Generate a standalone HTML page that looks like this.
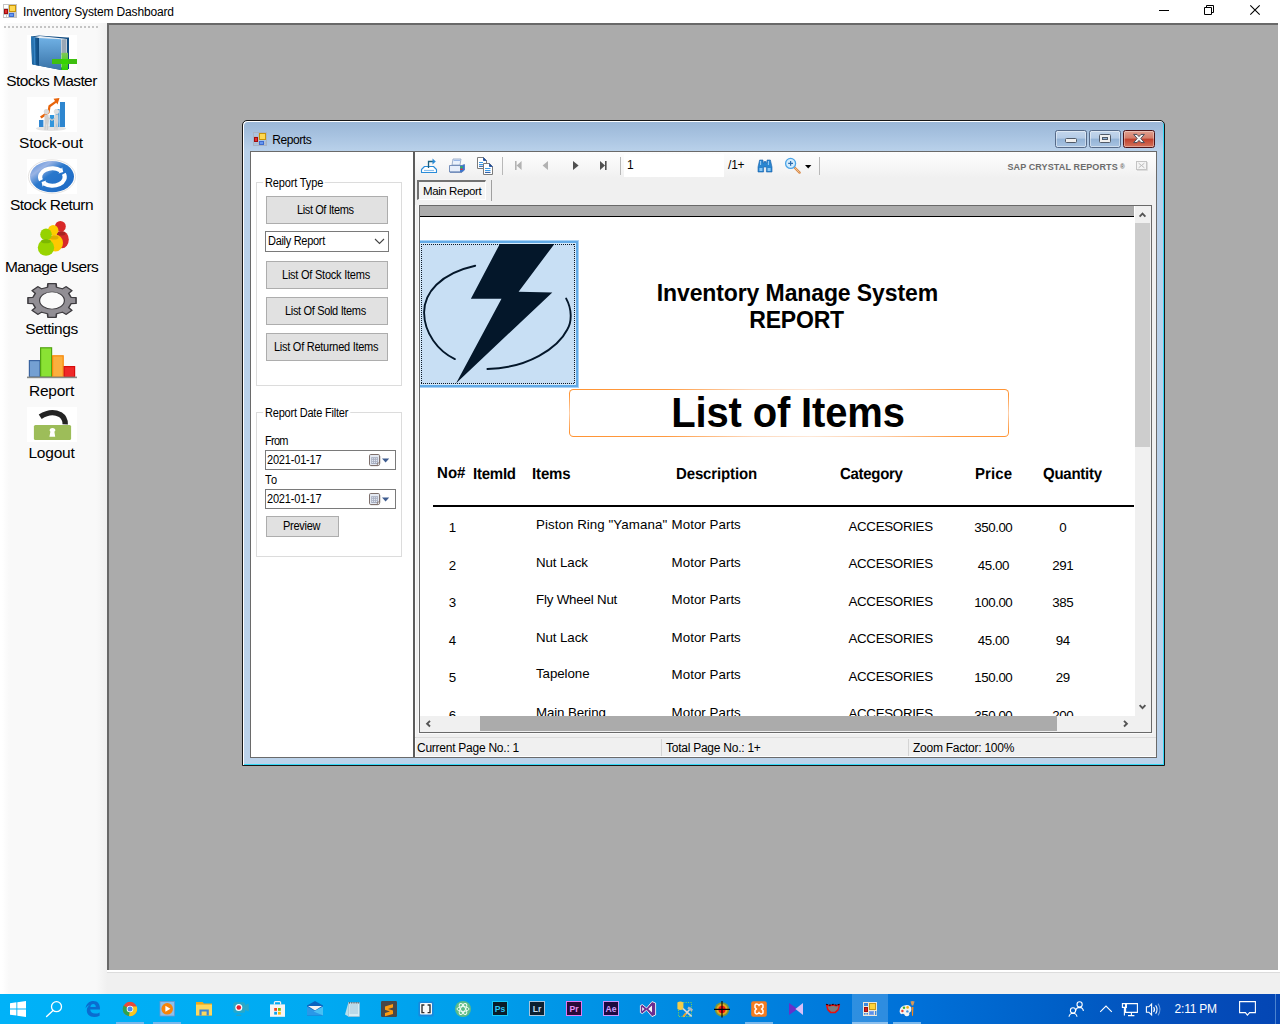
<!DOCTYPE html>
<html lang="en">
<head>
<meta charset="utf-8">
<title>Inventory System Dashboard</title>
<style>
*{box-sizing:border-box;margin:0;padding:0}
html,body{width:1280px;height:1024px;overflow:hidden;background:#fff}
body{position:relative;font-family:"Liberation Sans","DejaVu Sans",sans-serif;font-size:11px;color:#000;-webkit-font-smoothing:antialiased}
.abs{position:absolute}
svg{position:absolute;overflow:visible}
/* ===== main window ===== */
#titlebar{left:0;top:0;width:1280px;height:23px;background:#fff}
#titletext{left:23px;top:5px;font-size:12px;line-height:15px;white-space:nowrap;color:#000;letter-spacing:-.15px}
#sidebar{left:0;top:23px;width:107px;height:971px;background:linear-gradient(90deg,#fff 0,#fff 2px,#f9f9f9 9px,#f9f9f9 96px,#f1f1f1 106px,#f0f0f0 107px)}
#grip{left:4px;top:26px;width:95px;height:2px;background-image:linear-gradient(90deg,#c4c4c4 2px,transparent 2px);background-size:4px 2px}
.sb-lbl{left:0;width:103px;text-align:center;font-size:15.5px;line-height:20px;white-space:nowrap;color:#000}
.sb-ico{left:27px;width:50px;height:35px;background:#fff}
#mdi{left:107px;top:23px;width:1171px;height:947px;background:#ababab;border-left:2px solid #696969;border-top:2px solid #696969}
#mdistatus{left:107px;top:972px;width:1173px;height:22px;background:#f0f0f0}
/* ===== taskbar ===== */
#taskbar{left:0;top:994px;width:1280px;height:30px;background:linear-gradient(90deg,#00b2f8 0,#00aaf2 316px,#009cea 500px,#008ae2 680px,#0070d8 920px,#005ec6 1070px,#0450bc 1160px,#0448b6 1250px,#0446b4 1280px)}
/* ===== Reports child window ===== */
#win{left:242px;top:120px;width:923px;height:646px;border:1px solid #161616;border-radius:5px 5px 0 0;background:linear-gradient(180deg,#9ab6d6 0,#a7c2e0 14px,#b9d1ea 30px,#bbd2ea 100%);box-shadow:inset 1px 1px 0 0 #fff,inset -1px -1px 0 0 #34d8f6}
#wintitle{left:272.2px;top:133px;font-size:12px;line-height:15px;white-space:nowrap;letter-spacing:-.4px}
#client{left:250px;top:151px;width:907px;height:607px;background:#fff;border:1px solid #6a6a6a}

/* title controls */
.ico14{width:14px;height:14px}
/* Reports window internals */
.btn{background:#e1e1e1;border:1px solid #adadad;text-align:left;font-size:11px;white-space:nowrap;line-height:26px;letter-spacing:-.35px}
.gb{border:1px solid #dcdcdc}
.gbl{background:#fff;font-size:12px;line-height:13px;white-space:nowrap;padding:0 2px;letter-spacing:-.3px;transform:scaleX(.9167);transform-origin:2px 0}
.lbl{font-size:12px;line-height:13px;white-space:nowrap;letter-spacing:-.3px;transform:scaleX(.9167);transform-origin:0 0}
.ms{display:inline-block;font-size:12px;transform:scaleX(.9167);transform-origin:0 50%;white-space:nowrap}
.inp{background:#fff;border:1px solid #7a7a7a;font-size:11px;line-height:18px;white-space:nowrap;letter-spacing:-.3px}
.cap{border:1px solid;border-radius:2.5px}
#tb{left:415px;top:152px;width:741px;height:53px;background:linear-gradient(180deg,#fdfdfd 0,#f9f9f9 10px,#f0f0f0 26px,#f0f0f0 100%)}
.sep{width:1px;background:#b8b8b8}
.seg{font-size:12px;line-height:15px;white-space:nowrap}
.rh{font-weight:bold;font-size:16px;line-height:17px;white-space:nowrap;text-rendering:geometricPrecision;transform:scaleX(.9375);transform-origin:0 0}
.rd{font-size:13.33px;line-height:15px;white-space:nowrap}
.rc{text-align:center}
.rn{letter-spacing:-.45px;text-indent:.45px}
</style>
</head>
<body>
<div id="titlebar" class="abs"></div>
<div id="titletext" class="abs">Inventory System Dashboard</div>

<!-- main window title bar icon + controls -->
<svg class="abs" style="left:3px;top:4px" width="14" height="14" viewBox="0 0 14 14">
<rect x=".5" y=".5" width="13" height="13" fill="#fff" stroke="#c4c4c4"/>
<path d="M5.5 1 V13 M1 4.5 H5.5 M1 10.5 H5.5 M5.5 8.5 H13 M12.5 9 V13 M3.5 11 V13 M11.5 9 V13" stroke="#c8c8c8" stroke-width="1" fill="none"/>
<rect x="6.5" y="1.5" width="6" height="6" fill="#ffd850" stroke="#c89408"/>
<rect x="1.5" y="5.5" width="3" height="4" fill="#e03030" stroke="#a00c0c"/>
<rect x="6.5" y="9.5" width="4" height="3" fill="#6898f0" stroke="#3c6cd0"/>
</svg>
<svg class="abs" style="left:1150px;top:0" width="130" height="23" viewBox="0 0 130 23">
<path d="M9 10.5 H19" stroke="#000" stroke-width="1"/>
<path d="M54.5 7.5 H61.5 V14.5 H54.5 Z M56.5 7.5 V5.5 H63.5 V12.5 H61.5" fill="none" stroke="#000" stroke-width="1"/>
<path d="M100.3 5.3 L109.7 14.7 M109.7 5.3 L100.3 14.7" stroke="#000" stroke-width="1.1"/>
</svg>
<div id="sidebar" class="abs"></div>
<div id="grip" class="abs"></div>

<!-- ===== sidebar items ===== -->
<div class="abs sb-ico" style="top:35px"><svg width="50" height="35" viewBox="0 0 50 35">
<defs>
<linearGradient id="bk1" x1="0" y1="0" x2="0" y2="1"><stop offset="0" stop-color="#6fb0e4"/><stop offset="1" stop-color="#3a74a8"/></linearGradient>
<linearGradient id="bk2" x1="0" y1="0" x2="1" y2="0"><stop offset="0" stop-color="#2f7fbe"/><stop offset=".5" stop-color="#1a5e98"/><stop offset="1" stop-color="#0f4a80"/></linearGradient>
<linearGradient id="pl1" x1="0" y1="0" x2="0" y2="1"><stop offset="0" stop-color="#7fc858"/><stop offset="1" stop-color="#2fd000"/></linearGradient>
</defs>
<path d="M4 1.5 L12 0.5 L40 2.5 L42 2.5 L42 34 L34 35 L6 29.6 L5 29 Z" fill="#0f4a80"/>
<path d="M6 2.2 L13 1 L36 3.4 L40 4 L40 32 L36 34 Z" fill="#e8eef4"/>
<path d="M34.5 4.5 L39.5 4 L39.5 20 L34.5 20 Z" fill="#9aa7b6"/>
<path d="M4 1.5 L12 3 L12 30.8 L5.4 29.4 Z" fill="url(#bk2)"/><path d="M6.4 2.2 L8 2.5 L8.6 30 L7.2 29.7 Z" fill="#3f8fd0" opacity=".8"/>
<path d="M12 3 L34 4.2 L34 35 L12 30.8 Z" fill="url(#bk1)"/>
<rect x="34.4" y="17.8" width="6.6" height="17.2" fill="url(#pl1)"/>
<rect x="25" y="24" width="25" height="5" fill="#3fbf10"/>
<rect x="34.4" y="24" width="6.6" height="5" fill="#35d400"/>
</svg></div>
<div class="abs sb-lbl" style="top:71px;letter-spacing:-.6px">Stocks Master</div>

<div class="abs sb-ico" style="top:97px"><svg width="50" height="35" viewBox="0 0 50 35">
<ellipse cx="24" cy="31.5" rx="15" ry="2.5" fill="#e4e4e4"/>
<rect x="12" y="23" width="4.4" height="7" fill="#2f86d2"/>
<rect x="22.8" y="18" width="4.4" height="12" fill="#3196dc"/>
<rect x="28.6" y="12" width="4" height="18" fill="#4a9ede"/>
<rect x="33" y="5" width="5" height="25" fill="#2e86cf"/>
<path d="M13 19.5 L20.5 14.5 L21.5 8.5 L28 4 L26.5 1.8 L32.5 1 L30.5 7.5 L29.3 5.8 L23.5 10 L22.5 16 L14.5 21.5 Z" fill="#e8640a"/>
<circle cx="19.4" cy="14.5" r="2.6" fill="#d9d9d9"/>
<path d="M17.5 17.5 L21.5 17.5 L22 24 L21 33 L19.6 33 L19.6 26 L18.6 33 L17.4 33 Z" fill="#cfcfcf"/>
<circle cx="29.4" cy="14.5" r="2.6" fill="#dedede"/>
<path d="M27.6 17.5 L31.2 17.5 L31.4 24 L30.6 33 L29.4 33 L29.2 26 L28.4 33 L27.2 33 Z" fill="#d4d4d4"/>
<path d="M21.5 20 L25 22.4 L28 20.4 L28 22 L25 24 L21.5 21.8 Z" fill="#c8c8c8"/>
</svg></div>
<div class="abs sb-lbl" style="top:133px;letter-spacing:-.2px;left:-.6px">Stock-out</div>

<div class="abs sb-ico" style="top:159px"><svg width="50" height="35" viewBox="0 0 50 35">
<defs><linearGradient id="sr1" x1="0" y1="0" x2="1" y2="1"><stop offset="0" stop-color="#4a86d8"/><stop offset=".25" stop-color="#9ab4e4"/><stop offset=".45" stop-color="#2a78cc"/><stop offset="1" stop-color="#1c68c4"/></linearGradient></defs>
<ellipse cx="25" cy="17.6" rx="23.6" ry="16.8" fill="none" stroke="#e6e4e2" stroke-width="1"/>
<ellipse cx="25" cy="17.6" rx="22" ry="15.6" fill="url(#sr1)"/>
<path d="M14.00 21.26 A12.3 8.7 0 0 1 33.63 11.53 M36.80 14.74 A12.3 8.7 0 0 1 17.17 24.47" fill="none" stroke="#fff" stroke-width="4.2"/>
<path d="M31.48 14.41 L36.23 13.07 L35.13 8.27 Z M19.32 21.59 L14.57 22.93 L15.67 27.73 Z" fill="#fff"/>
</svg></div>
<div class="abs sb-lbl" style="top:195px;letter-spacing:-.56px">Stock Return</div>

<div class="abs" style="left:27px;top:221px;width:50px;height:35px"><svg width="50" height="35" viewBox="0 0 50 35">
<circle cx="33.4" cy="5.4" r="5.4" fill="#d82828"/>
<ellipse cx="35" cy="18.6" rx="6.8" ry="8.6" fill="#d62a2a"/>
<ellipse cx="34" cy="12.5" rx="4.6" ry="2" fill="#a82222"/>
<circle cx="26.2" cy="9.2" r="5.2" fill="#ffcc00"/>
<ellipse cx="28.4" cy="22" rx="7.6" ry="8.6" fill="#ffc800"/>
<ellipse cx="27" cy="16.4" rx="4.6" ry="2" fill="#e0b000"/>
<circle cx="19" cy="13.4" r="5.8" fill="#96d200"/>
<ellipse cx="19" cy="26.6" rx="8.2" ry="8.2" fill="#98d400"/>
<ellipse cx="19" cy="20.2" rx="5" ry="2" fill="#7cb800"/>
</svg></div>
<div class="abs sb-lbl" style="top:257px;letter-spacing:-.64px">Manage Users</div>

<div class="abs" style="left:27px;top:283px;width:50px;height:35px"><svg width="50" height="35" viewBox="-25 -17.5 50 35">
<g transform="scale(1,0.7)">
<path id="gearp" fill="#918e94" stroke="#3e3c40" stroke-width="1.6" stroke-linejoin="round" d="M-4.47 -19.08 L-4.13 -24.05 L4.13 -24.05 L4.47 -19.08 L10.33 -16.65 L14.09 -19.92 L19.92 -14.09 L16.65 -10.33 L19.08 -4.47 L24.05 -4.13 L24.05 4.13 L19.08 4.47 L16.65 10.33 L19.92 14.09 L14.09 19.92 L10.33 16.65 L4.47 19.08 L4.13 24.05 L-4.13 24.05 L-4.47 19.08 L-10.33 16.65 L-14.09 19.92 L-19.92 14.09 L-16.65 10.33 L-19.08 4.47 L-24.05 4.13 L-24.05 -4.13 L-19.08 -4.47 L-16.65 -10.33 L-19.92 -14.09 L-14.09 -19.92 L-10.33 -16.65 Z"/>
<ellipse cx="0" cy="0" rx="12.4" ry="12.4" fill="#fafafa" stroke="#3e3c40" stroke-width="1.2"/>
</g>
</svg></div>
<div class="abs sb-lbl" style="top:319px;letter-spacing:-.45px">Settings</div>

<div class="abs" style="left:27px;top:345px;width:50px;height:35px"><svg width="50" height="35" viewBox="0 0 50 35">
<rect x="2.4" y="15.6" width="10.6" height="16.4" fill="#74a0d2" stroke="#3a64a0" stroke-width="1.2"/>
<rect x="13.6" y="2.8" width="11" height="29.2" fill="#8ae234" stroke="#52a412" stroke-width="1.2"/>
<rect x="25.6" y="10.8" width="10.6" height="21.2" fill="#fcaf3e" stroke="#f88808" stroke-width="1.2"/>
<rect x="37.2" y="21.6" width="10.4" height="10.4" fill="#ef2929" stroke="#d80c0c" stroke-width="1.2"/>
<rect x="0" y="31.6" width="50" height="1.6" fill="#888a85"/>
</svg></div>
<div class="abs sb-lbl" style="top:381px;letter-spacing:-.25px">Report</div>

<div class="abs sb-ico" style="top:407px"><svg width="50" height="35" viewBox="0 0 50 35">
<path d="M13.2 9.8 Q24 2.8 33.2 7.6 Q38.4 11 38.2 17.4" fill="none" stroke="#232323" stroke-width="5.4"/>
<rect x="6.9" y="18" width="37.2" height="15" rx="1.6" fill="#9dbd59"/>
<path d="M22.6 23.6 Q22.6 21 25.4 21 Q28.4 21 28.4 23.6 L27.4 24.8 L28.2 29.8 L22.4 29.8 L23.4 24.8 Z" fill="#fff"/>
</svg></div>
<div class="abs sb-lbl" style="top:443px;letter-spacing:-.2px">Logout</div>
<div id="mdi" class="abs"></div>
<div id="mdistatus" class="abs"></div>
<div class="abs" style="left:107px;top:972px;width:1173px;height:1px;background:#dcdcdc"></div>
<div id="taskbar" class="abs"></div>

<!-- ===== taskbar icons ===== -->
<div class="abs" style="left:852px;top:994px;width:36px;height:30px;background:rgba(255,255,255,.18)"></div>
<div class="abs" style="left:116px;top:1022px;width:28px;height:2px;background:#7ab8ec"></div>
<div class="abs" style="left:153px;top:1022px;width:28px;height:2px;background:#7ab8ec"></div>
<div class="abs" style="left:745px;top:1022px;width:28px;height:2px;background:#7ab8ec"></div>
<div class="abs" style="left:852px;top:1022px;width:36px;height:2px;background:#8cc0ee"></div>
<div class="abs" style="left:893px;top:1022px;width:28px;height:2px;background:#7ab8ec"></div>
<svg class="abs" style="left:0;top:994px" width="1280" height="30" viewBox="0 994 1280 30">
<!-- start -->
<path d="M10 1003.2 L16.4 1002.3 V1008.5 H10 Z M17.3 1002.2 L26 1001 V1008.5 H17.3 Z M10 1009.4 H16.4 V1015.6 L10 1014.7 Z M17.3 1009.4 H26 V1017 L17.3 1015.8 Z" fill="#fff"/>
<!-- search -->
<circle cx="56.5" cy="1006.7" r="5" fill="none" stroke="#fff" stroke-width="1.3"/><path d="M53 1010.4 L46.6 1016.6" stroke="#fff" stroke-width="1.4" stroke-linecap="round"/>
<!-- edge -->
<path d="M85.6 1008.6 C86 1003.6 89.4 1001 93.4 1001 C97.8 1001 100.2 1004.2 100 1009.6 H90.2 C90.4 1012.4 92.4 1013.6 95 1013.6 C96.8 1013.6 98.4 1013.2 99.6 1012.4 V1015.8 C98 1016.6 96.2 1017 94.2 1017 C89.4 1017 86.6 1014 86.8 1010 C86.9 1008 88 1006.2 89.8 1005 C88 1005.4 86.4 1006.8 85.6 1008.6 Z M90.4 1007 H95.8 C95.8 1005 94.8 1004 93.2 1004 C91.6 1004 90.6 1005.2 90.4 1007 Z" fill="#0a6cd0" fill-rule="evenodd"/>
<!-- chrome -->
<circle cx="130" cy="1009" r="7.2" fill="#e84a3a"/>
<path d="M130 1009 L123.6 1005.6 A7.2 7.2 0 0 0 129 1016.1 L132.4 1010.6 Z" fill="#2ea44e"/>
<path d="M130 1009 L129 1016.1 A7.2 7.2 0 0 0 136.8 1006.6 H130 Z" fill="#f8c820"/>
<circle cx="130" cy="1009" r="3.3" fill="#fff"/><circle cx="130" cy="1009" r="2.5" fill="#4a8cf0"/>
<!-- media player -->
<rect x="160" y="1001.6" width="14.4" height="14.4" fill="#8cc0ec" stroke="#6a98d0" stroke-width=".8"/>
<circle cx="167.2" cy="1008.8" r="5.8" fill="#f88408"/><path d="M165.4 1005.8 L170.4 1008.8 L165.4 1011.8 Z" fill="#fff"/>
<!-- explorer -->
<path d="M196 1002 H202.6 L204 1003.6 H212 V1015.4 H196 Z" fill="#f0a818"/><path d="M196 1004.6 H212 V1015.4 H196 Z" fill="#fcd860"/>
<path d="M199.4 1009.4 H208.8 V1015.4 H206.6 V1011.6 H201.6 V1015.4 H199.4 Z" fill="#3a86d8"/>
<!-- recorder -->
<path d="M233.4 1003.8 Q233.4 1002.2 235 1002.2 H243.4 Q245 1002.2 245 1003.8 V1005 L248.8 1003.4 V1011.6 L245 1010 V1011.2 Q245 1012.8 243.4 1012.8 H235 Q233.4 1012.8 233.4 1011.2 Z" fill="#2aa8c8"/>
<circle cx="238.8" cy="1007.5" r="3.5" fill="#fff"/><circle cx="238.8" cy="1007.5" r="2.3" fill="#e82030"/><path d="M237 1014.4 L240.6 1014.4 L241.6 1016 H236 Z" fill="#2aa0c0"/>
<!-- store -->
<path d="M274.4 1004.4 V1002.6 Q274.4 1001.6 275.4 1001.6 H279.6 Q280.6 1001.6 280.6 1002.6 V1004.4" fill="none" stroke="#f0f0f0" stroke-width="1.2"/>
<rect x="270" y="1004.4" width="15" height="12.4" fill="#f4f4f4"/>
<rect x="274.2" y="1008" width="2.8" height="2.8" fill="#f04820"/><rect x="278" y="1008" width="2.8" height="2.8" fill="#7cbc08"/><rect x="274.2" y="1011.8" width="2.8" height="2.8" fill="#08a4f0"/><rect x="278" y="1011.8" width="2.8" height="2.8" fill="#fcb808"/>
<!-- mail -->
<path d="M307 1005.6 L315 1001 L323 1005.6 V1015.6 H307 Z" fill="#0a64c0"/><path d="M308 1006 H322 L315 1010.6 Z" fill="#f4f4f4"/><path d="M307 1006.6 L323 1015.6 H307 Z" fill="#2a98e8"/><path d="M323 1006.6 V1015.6 L313.6 1011.4 Z" fill="#48c0f4"/>
<!-- notepad -->
<path d="M345 1014.6 L348.4 1002.4 H359.4 V1016.4 H348.4 Z" fill="#b8e0ec"/><rect x="348.4" y="1002.8" width="11" height="13.6" fill="#d4ecf4" stroke="#98b8c8" stroke-width=".6"/><path d="M349.6 1005 H358 M349.6 1007 H358 M349.6 1009 H358 M349.6 1011 H358 M349.6 1013 H358" stroke="#8ab8d0" stroke-width=".7"/><path d="M349.6 1002.2 V1003.6 M351.8 1002.2 V1003.6 M354 1002.2 V1003.6 M356.2 1002.2 V1003.6 M358.2 1002.2 V1003.6" stroke="#404040" stroke-width=".9"/>
<!-- sublime -->
<rect x="381" y="1001" width="16" height="16" rx="1.2" fill="#484848"/><path d="M385 1006.4 L393 1004 V1007.4 L388 1009 L393 1010.6 V1014 L385 1016.2 V1013 L390 1011.4 L385 1009.8 Z" fill="#fc9c10"/>
<!-- brackets -->
<rect x="418.4" y="1001.4" width="15.2" height="15.2" rx="1.6" fill="#1a88dc"/><rect x="420" y="1003" width="12" height="11.6" rx="1" fill="#f8f8f8"/><path d="M424.4 1005 H422 V1012.6 H424.4 M427.6 1005 H430 V1012.6 H427.6" fill="none" stroke="#303030" stroke-width="1.4"/>
<!-- atom -->
<circle cx="463" cy="1009" r="8" fill="#5cbc88"/><g fill="none" stroke="#f0fcf4" stroke-width="1"><ellipse cx="463" cy="1009" rx="6" ry="2.4"/><ellipse cx="463" cy="1009" rx="6" ry="2.4" transform="rotate(60 463 1009)"/><ellipse cx="463" cy="1009" rx="6" ry="2.4" transform="rotate(120 463 1009)"/></g>
<!-- adobe -->
<rect x="492.5" y="1001.5" width="15" height="14" fill="#0a1c28" stroke="#18c8f8" stroke-width="1"/>
<rect x="529.5" y="1001.5" width="15" height="14" fill="#0c2030" stroke="#a8c4dc" stroke-width="1"/>
<rect x="566.5" y="1001.5" width="15" height="14" fill="#2a0838" stroke="#e478f0" stroke-width="1"/>
<rect x="603.5" y="1001.5" width="15" height="14" fill="#1c0840" stroke="#cc90f8" stroke-width="1"/>
<text x="500" y="1012.2" font-family="Liberation Sans,sans-serif" font-size="8.6" font-weight="bold" text-anchor="middle" fill="#28c8f8">Ps</text>
<text x="537" y="1012.2" font-family="Liberation Sans,sans-serif" font-size="8.6" font-weight="bold" text-anchor="middle" fill="#c0dcf0">Lr</text>
<text x="574" y="1012.2" font-family="Liberation Sans,sans-serif" font-size="8.6" font-weight="bold" text-anchor="middle" fill="#e890f4">Pr</text>
<text x="611" y="1012.2" font-family="Liberation Sans,sans-serif" font-size="8.6" font-weight="bold" text-anchor="middle" fill="#d0a0fc">Ae</text>
<!-- visual studio -->
<path d="M640.4 1005.6 L642.4 1004.6 L646.6 1008 L652 1001.6 L655.6 1003 V1015 L652 1016.6 L646.6 1010.2 L642.4 1013.6 L640.4 1012.6 Z" fill="#6c2c90" stroke="#f4f4f4" stroke-width=".9" stroke-linejoin="round"/><path d="M652 1005.6 V1012.4 L648.2 1009 Z M642.2 1007 V1011.2 L644.4 1009.1 Z" fill="#f4f4f4"/>
<!-- tools -->
<rect x="678.5" y="1002.5" width="13" height="14" fill="none" stroke="#88d848" stroke-width="1" stroke-dasharray="1 1.4"/><path d="M677.4 1002.4 Q680.4 1000.6 683.4 1002.4 V1009 Q680.4 1010.8 677.4 1009 Z" fill="#f4cc48"/><path d="M683 1008.6 L691.6 1016.4 M691 1008 L683.2 1016.6" stroke="#d8d8d8" stroke-width="1.6"/><path d="M688 1007.6 L692.4 1010.6" stroke="#b8b8b8" stroke-width="2.4"/><path d="M683.2 1016.6 L686 1013.4" stroke="#f0a020" stroke-width="1.6"/>
<!-- target -->
<circle cx="722" cy="1009.4" r="7.2" fill="#7c9838"/><circle cx="722" cy="1009.4" r="5.6" fill="#e8a820"/><circle cx="722" cy="1009.4" r="3.6" fill="#f01810"/><path d="M714 1009.4 H730 M722 1001 V1017.6" stroke="#000" stroke-width="1.1"/>
<!-- xampp -->
<rect x="751.2" y="1001.2" width="15.6" height="15.6" rx="2" fill="#f47c20"/><path d="M755 1005.4 Q755 1004 756.6 1004 Q758 1004 759 1005.4 Q760 1004 761.4 1004 Q763 1004 763 1005.4 V1007.4 L761.6 1009 L763 1010.6 V1012.6 Q763 1014 761.4 1014 Q760 1014 759 1012.6 Q758 1014 756.6 1014 Q755 1014 755 1012.6 V1010.6 L756.4 1009 L755 1007.4 Z" fill="none" stroke="#fff" stroke-width="1.5"/>
<!-- vs preview bowtie -->
<path d="M789 1003 L797.6 1009 L789 1015 Z" fill="#6830c8"/><path d="M803 1003 L795.4 1009 L803 1015 Z" fill="#d8c0f8"/>
<!-- bird -->
<path d="M826.6 1004.8 L829.4 1005.8 L832.8 1005 L836.4 1005.8 L839.4 1004.8 L838.2 1009.6 L835 1012.6 H830.8 L827.8 1009.6 Z" fill="#7c7c7c" stroke="#e81010" stroke-width="1.5" stroke-linejoin="round"/><path d="M826 1004.2 L829.6 1005.2 L833 1004.4 L836.4 1005.2 L840 1004.2" fill="none" stroke="#180808" stroke-width="1.1" stroke-dasharray="2 1"/>
<!-- active app icon -->
<rect x="863" y="1002" width="14" height="14" fill="#ece8d8"/><rect x="864" y="1003" width="4" height="3" fill="#3a88e0"/><rect x="869.5" y="1003.5" width="6" height="6" fill="#ffd43a" stroke="#c89818"/><rect x="864.5" y="1007.5" width="3" height="4" fill="#c82020" stroke="#981010"/><rect x="869.5" y="1011.5" width="4" height="3" fill="#5a90e8" stroke="#7aa4ec"/><rect x="864" y="1013" width="1.6" height="1.6" fill="#3a88e0"/><rect x="866.4" y="1013" width="1.6" height="1.6" fill="#3a88e0"/><rect x="875" y="1011" width="1.4" height="4" fill="#3a88e0"/>
<!-- paint -->
<path d="M899.6 1011.6 Q899.6 1005.6 906.4 1005 Q911.6 1005 911.4 1009.6 Q911.2 1012 909.6 1012.4 Q908.8 1013 909.4 1014.4 Q909 1016.4 906.6 1016.2 Q904.6 1016 904.4 1014.4 Q903 1013.4 901.6 1014.2 Q899.6 1014 899.6 1011.6 Z" fill="#f4f4f0"/><circle cx="902.4" cy="1011" r="1.2" fill="#e84030"/><circle cx="904" cy="1007.8" r="1.2" fill="#40b030"/><circle cx="907.6" cy="1007.4" r="1.3" fill="#f8b010"/><circle cx="907.4" cy="1011.4" r="1.2" fill="#3a90e0"/><path d="M911.6 1007 H913.4 L913 1015.8 H912 Z" fill="#f88818"/><path d="M910.4 1001.6 Q912.4 1000.6 914.6 1001.6 L913.2 1005.4 H911.8 Z" fill="#d89858"/>
<!-- tray -->
<g fill="none" stroke="#fff" stroke-width="1.1"><circle cx="1079.6" cy="1004.4" r="2.6"/><path d="M1075.6 1011 Q1076 1007.6 1079.6 1007.4 Q1083 1007.6 1083.4 1011"/><circle cx="1073" cy="1010.4" r="2.6"/><path d="M1069 1016.8 Q1069.4 1013.4 1073 1013.2 Q1076.6 1013.4 1077 1016.8"/>
<path d="M1100.2 1011.8 L1106 1006 L1111.8 1011.8"/>
<path d="M1125.6 1003.6 H1137.4 V1012.4 H1125.6 Z M1131.4 1012.4 V1015.4 M1128 1015.6 H1134.4 M1122.4 1003.6 H1126.4 V1007.4 H1122.4 Z M1124.4 1007.4 V1015.6"/>
<path d="M1146.4 1006.8 H1148.8 L1151.6 1004 V1015 L1148.8 1012.2 H1146.4 Z"/><path d="M1153.6 1007 Q1155.4 1009.4 1153.6 1012"/><path d="M1155.6 1005.4 Q1158.6 1009.4 1155.6 1013.6"/><path d="M1158 1003.6 Q1162 1009.4 1158 1015.4" opacity=".45"/>
<path d="M1239.6 1001.6 H1255.4 V1012.6 H1249.6 L1247.4 1015.2 L1245.4 1012.6 H1239.6 Z"/></g>
<text x="1174.6" y="1013.4" font-family="Liberation Sans,sans-serif" font-size="12" fill="#fff" letter-spacing="-.22">2:11 PM</text>
<rect x="1275" y="994" width="1" height="30" fill="#6a9cdc" opacity=".7"/>
</svg>
<div id="win" class="abs"></div>
<div id="wintitle" class="abs">Reports</div>
<div id="client" class="abs"></div>
<!-- ===== Reports window: title ===== -->
<svg class="abs" style="left:253px;top:132px" width="14" height="14" viewBox="0 0 14 14">
<rect x=".5" y=".5" width="13" height="13" fill="#aac4e2" stroke="#a8b4c4"/>
<path d="M5.5 1 V13 M1 4.5 H5.5 M1 11.5 H13 M12.5 9 V13" stroke="#b4bcc8" stroke-width="1" fill="none"/>
<rect x="6.5" y="1.5" width="6" height="6" fill="#ffd850" stroke="#c89408"/>
<rect x="1.5" y="5.5" width="3" height="4" fill="#e03030" stroke="#a00c0c"/>
<rect x="6.5" y="9.5" width="4" height="3" fill="#6898f0" stroke="#3c6cd0"/>
</svg>
<div class="abs cap" style="left:1055px;top:130px;width:32px;height:18px;border-color:#566a88;background:linear-gradient(180deg,#c3d6ec 0,#b4cbe6 45%,#93b3d6 50%,#a9c4e2 100%);box-shadow:inset 0 0 0 1px rgba(255,255,255,.45)"></div>
<div class="abs" style="left:1065px;top:138px;width:12px;height:5px;background:#f0f0f0;border:1px solid #505a68;border-radius:1.5px"></div>
<div class="abs cap" style="left:1089px;top:130px;width:32px;height:18px;border-color:#566a88;background:linear-gradient(180deg,#c3d6ec 0,#b4cbe6 45%,#93b3d6 50%,#a9c4e2 100%);box-shadow:inset 0 0 0 1px rgba(255,255,255,.45)"></div>
<div class="abs" style="left:1099px;top:134px;width:12px;height:9px;background:#f0f0f0;border:1px solid #505a68;border-radius:1.5px"></div>
<div class="abs" style="left:1102px;top:137px;width:6px;height:3px;background:#8fb0d4;border:1px solid #505a68"></div>
<div class="abs cap" style="left:1123px;top:130px;width:32px;height:18px;border-color:#4c1418;background:linear-gradient(180deg,#e0a090 0,#d47c68 45%,#c0402c 50%,#d4745c 100%);box-shadow:inset 0 0 0 1px rgba(255,255,255,.35)"></div>
<svg class="abs" style="left:1132px;top:133px" width="14" height="12" viewBox="0 0 14 12">
<path d="M1.6 1.4 L5 1.4 L7 3.6 L9 1.4 L12.4 1.4 L8.8 5.5 L12.4 9.6 L9 9.6 L7 7.4 L5 9.6 L1.6 9.6 L5.2 5.5 Z" fill="#f4f4f4" stroke="#4a4e5a" stroke-width="1" stroke-linejoin="round"/>
</svg>

<!-- ===== left panel ===== -->
<div class="abs gb" style="left:256px;top:182px;width:146px;height:204px"></div>
<div class="abs gbl" style="left:263px;top:177px;letter-spacing:-.16px">Report Type</div>
<div class="abs btn" style="left:266px;top:196px;width:122px;height:28px;padding-left:30.2px;letter-spacing:-.43px"><span class="ms">List Of Items</span></div>
<div class="abs inp" style="left:265px;top:231px;width:124px;height:21px;padding-left:2.2px;letter-spacing:-.33px"><span class="ms">Daily Report</span></div>
<svg class="abs" style="left:374px;top:238px" width="11" height="7" viewBox="0 0 11 7"><path d="M1 1 L5.5 5.5 L10 1" fill="none" stroke="#444" stroke-width="1.1"/></svg>
<div class="abs btn" style="left:266px;top:261px;width:122px;height:28px;padding-left:14.8px;letter-spacing:-.25px"><span class="ms">List Of Stock Items</span></div>
<div class="abs btn" style="left:266px;top:297px;width:122px;height:28px;padding-left:17.6px;letter-spacing:-.36px"><span class="ms">List Of Sold Items</span></div>
<div class="abs btn" style="left:266px;top:333px;width:122px;height:28px;padding-left:7.2px;letter-spacing:-.29px"><span class="ms">List Of Returned Items</span></div>

<div class="abs gb" style="left:256px;top:412px;width:146px;height:145px"></div>
<div class="abs gbl" style="left:263px;top:407px;letter-spacing:-.22px">Report Date Filter</div>
<div class="abs lbl" style="left:265px;top:435px;letter-spacing:-.8px">From</div>
<div class="abs inp" style="left:265px;top:450px;width:131px;height:20px;padding-left:1px;letter-spacing:-.2px"><span class="ms">2021-01-17</span></div>
<div class="abs lbl" style="left:265px;top:474px;letter-spacing:.6px">To</div>
<div class="abs inp" style="left:265px;top:489px;width:131px;height:20px;padding-left:1px;letter-spacing:-.2px"><span class="ms">2021-01-17</span></div>
<svg class="abs" style="left:368px;top:453px" width="24" height="14" viewBox="0 0 24 14"><path d="M2.5 13 H10 L12.6 10.4 V3" fill="none" stroke="#d8d8d8" stroke-width="1"/><rect x="1.5" y="1.5" width="10" height="11" rx="1.2" fill="#e4e9f2" stroke="#7e706c"/><rect x="3.2" y="4.2" width="6.8" height="6.8" fill="#a6adbf"/><path d="M4 5.7 H9.4 M4 7.6 H9.4 M4 9.5 H9.4" stroke="#dfe5f0" stroke-width="1.1" stroke-dasharray="1.2 .8"/><path d="M9.4 12.4 V10 H11.6" fill="#f4f6fa" stroke="#7e706c" stroke-width=".8"/><path d="M14 5.6 H21.2 L17.6 9.6 Z" fill="#3e5c90"/></svg>
<svg class="abs" style="left:368px;top:492px" width="24" height="14" viewBox="0 0 24 14"><path d="M2.5 13 H10 L12.6 10.4 V3" fill="none" stroke="#d8d8d8" stroke-width="1"/><rect x="1.5" y="1.5" width="10" height="11" rx="1.2" fill="#e4e9f2" stroke="#7e706c"/><rect x="3.2" y="4.2" width="6.8" height="6.8" fill="#a6adbf"/><path d="M4 5.7 H9.4 M4 7.6 H9.4 M4 9.5 H9.4" stroke="#dfe5f0" stroke-width="1.1" stroke-dasharray="1.2 .8"/><path d="M9.4 12.4 V10 H11.6" fill="#f4f6fa" stroke="#7e706c" stroke-width=".8"/><path d="M14 5.6 H21.2 L17.6 9.6 Z" fill="#3e5c90"/></svg>
<div class="abs btn" style="left:266px;top:516px;width:73px;height:21px;line-height:19px;padding-left:16.2px;letter-spacing:-.3px"><span class="ms">Preview</span></div>

<!-- ===== splitter + viewer toolbar ===== -->
<div class="abs" style="left:413px;top:152px;width:2px;height:605px;background:#5c5c5c"></div>
<div id="tb" class="abs"></div>
<div class="abs" style="left:415px;top:205px;width:741px;height:552px;background:#f0f0f0"></div>

<!-- toolbar icons -->
<svg class="abs" style="left:420px;top:157px" width="18" height="18" viewBox="0 0 18 18">
<path d="M1.5 15.5 H16.5 V12.5 L13.5 9.5 H4.5 L1.5 12.5 Z" fill="#fff" stroke="#2a8cd8" stroke-width="1.1" stroke-linejoin="round"/>
<path d="M4 13.5 H14" stroke="#8cc0ec" stroke-width="1.2"/>
<path d="M8.5 11 V4.5 H13" fill="none" stroke="#1a6080" stroke-width="1.3"/>
<path d="M12.5 1.6 L15.8 4.5 L12.5 7.4 Z" fill="#2a8cd8"/>
</svg>
<svg class="abs" style="left:448px;top:157px" width="18" height="18" viewBox="0 0 18 18">
<path d="M5 2 H13 L12 8 H4 Z" fill="#eaf2fc" stroke="#8aa0c0" stroke-width=".8"/>
<path d="M5.6 3.4 H12.2" stroke="#9ab8e8" stroke-width="1.2"/>
<path d="M1.5 8.5 H14 L16.5 7.5 V13 L14 15 H1.5 Z" fill="#e6eefa" stroke="#6a86b4" stroke-width=".9" stroke-linejoin="round"/>
<path d="M12 8.5 H14 L16.5 7.5 V13 L14 15 H12 Z" fill="#3a74d0"/>
<rect x="12.4" y="9.4" width="2.2" height="1.8" fill="#30c040"/><rect x="12.4" y="11.6" width="2.2" height="1.4" fill="#e03030"/>
<path d="M2 15.2 H14" stroke="#5a7ab0" stroke-width="1"/>
</svg>
<svg class="abs" style="left:476px;top:156px" width="18" height="20" viewBox="0 0 18 20">
<path d="M1.5 1.5 H7.5 L10.5 4.5 V12.5 H1.5 Z" fill="#fff" stroke="#7a7a7a" stroke-width="1"/>
<path d="M7.5 1.5 V4.5 H10.5" fill="#1a4a9a" stroke="#1a4a9a" stroke-width=".8"/>
<path d="M3 6.5 H7 M3 8.5 H7" stroke="#3a9ae8" stroke-width="1.1"/><path d="M3 10.3 H7" stroke="#1a50a0" stroke-width="1"/>
<path d="M7.5 7.5 H13.5 L16.5 10.5 V18.5 H7.5 Z" fill="#fff" stroke="#7a7a7a" stroke-width="1"/>
<path d="M13.5 7.5 V10.5 H16.5" fill="#1a4a9a" stroke="#1a4a9a" stroke-width=".8"/>
<path d="M9 12.5 H14.5 M9 14.5 H14.5" stroke="#3a9ae8" stroke-width="1.1"/><path d="M9 16.4 H14.5" stroke="#1a50a0" stroke-width="1"/>
</svg>
<div class="abs sep" style="left:502px;top:157px;height:18px"></div>
<svg class="abs" style="left:514px;top:160px" width="100" height="12" viewBox="0 0 100 12">
<path d="M1 1 H2.6 V10 H1 Z M7.6 1 V10 L2.6 5.5 Z" fill="#b2b2b2"/>
<path d="M34 1 V10 L28.6 5.5 Z" fill="#b2b2b2"/>
<path d="M59 1 V10 L64.6 5.5 Z" fill="#505050"/>
<path d="M86 1 V10 L91 5.5 Z M91 1 H92.6 V10 H91 Z" fill="#505050"/>
</svg>
<div class="abs sep" style="left:620px;top:157px;height:18px"></div>
<div class="abs" style="left:624px;top:154px;width:100px;height:23px;background:#fff"></div>
<div class="abs seg" style="left:627px;top:158px">1</div>
<div class="abs seg" style="left:728px;top:158px;letter-spacing:-.2px">/1+</div>
<svg class="abs" style="left:757px;top:159px" width="16" height="14" viewBox="0 0 16 14">
<path d="M2.6 1 H6 V4 H6.8 V2.6 H9.2 V4 H10 V1 H13.4 L15 8 V13 H9.4 V8 H6.6 V13 H1 V8 Z" fill="#2a86d0" stroke="#1a60a8" stroke-width=".6"/>
<path d="M2.4 9 H5.4 V12 H2.4 Z M10.6 9 H13.6 V12 H10.6 Z" fill="#8cc8f4"/>
<path d="M3.6 2 V6 M11.4 2 V6" stroke="#9cd0f8" stroke-width="1"/>
</svg>
<svg class="abs" style="left:784px;top:157px" width="18" height="18" viewBox="0 0 18 18">
<path d="M10 10 L15.6 15.6" stroke="#d88848" stroke-width="2.4" stroke-linecap="round"/>
<path d="M10.6 10.6 L15.2 15.2" stroke="#f4d0a0" stroke-width=".8" stroke-linecap="round"/>
<circle cx="6.6" cy="6.4" r="5" fill="#d4ecfc" stroke="#4aa4e8" stroke-width="1.3"/>
<path d="M6.6 4 V8.8 M4.2 6.4 H9" stroke="#2a6cb0" stroke-width="1.2"/>
</svg>
<svg class="abs" style="left:805px;top:165px" width="7" height="4" viewBox="0 0 7 4"><path d="M0 0 H6.4 L3.2 3.6 Z" fill="#000"/></svg>
<div class="abs sep" style="left:819px;top:157px;height:18px"></div>
<div class="abs" style="left:1007.4px;top:162px;font-size:9px;line-height:11px;font-weight:bold;color:#6c6c6c;white-space:nowrap;letter-spacing:.12px">SAP CRYSTAL REPORTS</div>
<div class="abs" style="left:1120px;top:163px;font-size:6.5px;line-height:7px;font-weight:bold;color:#6c6c6c">®</div>
<svg class="abs" style="left:1136px;top:161px" width="12" height="10" viewBox="0 0 12 10"><rect x=".5" y=".5" width="10" height="8" fill="#f4f4f4" stroke="#c4c4c4"/><path d="M2.6 2.2 L8.4 6.8 M8.4 2.2 L2.6 6.8" stroke="#bcbcbc" stroke-width="1"/><path d="M11.5 1 V9.5 H1" fill="none" stroke="#dcdcdc"/></svg>
<!-- tab -->
<div class="abs" style="left:417px;top:180px;width:69px;height:20px;background:#f5f5f5;border-top:2px solid #727272;border-left:2px solid #727272;border-right:1px solid #fff;border-bottom:1px solid #fff"></div>
<div class="abs seg" style="left:423px;top:184px;font-size:11.5px;letter-spacing:-.4px">Main Report</div>
<div class="abs sep" style="left:491px;top:180px;height:21px;background:#a0a0a0"></div>


<!-- ===== page view ===== -->
<div class="abs" style="left:419px;top:205px;width:733px;height:528px;background:#fff;border:1px solid #696969"></div>
<div class="abs" style="left:420px;top:206px;width:714px;height:10px;background:#ababab"></div>
<div class="abs" style="left:420px;top:216px;width:714px;height:1px;background:#000"></div>
<!-- logo -->
<div class="abs" style="left:420px;top:240px;width:159px;height:148px;background:#a8d2f6"></div><div class="abs" style="left:420px;top:241px;width:158px;height:146px;background:#62aae6"></div><div class="abs" style="left:420px;top:243px;width:156px;height:142px;background:#c8dff4;box-shadow:inset 0 0 0 1px #d6eafa"></div>
<svg class="abs" style="left:0;top:0" width="1280" height="1024" viewBox="0 0 1280 1024">
<path d="M421 244.5 H575 M421 383.5 H575 M421.5 244 V384 M574.5 244 V384" fill="none" stroke="#0c1826" stroke-width="1" stroke-dasharray="1 1" shape-rendering="crispEdges"/>
<path d="M499.8 243.9 L554.4 243.9 L518.6 291.8 L552.3 292.4 L456.1 383.2 L501.5 298.8 L470.9 298.8 Z" fill="#04172a"/>
<path d="M475.2 265.7 C 440 273.5 424 293 424.1 312.5 C 424.2 333 438 351 454.9 359.1" fill="none" stroke="#04172a" stroke-width="1.9" stroke-linecap="round"/>
<path d="M566.2 298.6 C 572 309 572 322 567.3 329.5 C 558 348 528 368 487.4 369" fill="none" stroke="#04172a" stroke-width="1.9" stroke-linecap="round"/>
</svg>
<div class="abs" style="left:597.4px;top:280px;width:400px;text-align:center;font-weight:bold;font-size:23px;line-height:27px;white-space:nowrap;letter-spacing:-.11px">Inventory Manage System</div>
<div class="abs" style="left:596.6px;top:307px;width:400px;text-align:center;font-weight:bold;font-size:23px;line-height:27px;white-space:nowrap;letter-spacing:-.22px">REPORT</div>
<div class="abs" style="left:569px;top:389px;width:440px;height:48px;border-radius:4.5px;background:linear-gradient(90deg,#ff9434 0,#ff9a40 22%,#fdd9be 42%,#fde8d8 55%,#fdc9a0 72%,#ff9a40 88%,#ff9434 100%)"></div>
<div class="abs" style="left:569px;top:394px;width:440px;height:38px;background:linear-gradient(180deg,#ff9434 0,#fdd0ac 50%,#ff9434 100%)"></div>
<div class="abs" style="left:570px;top:390px;width:438px;height:46px;border-radius:3.5px;background:#fff"></div>
<div class="abs" style="left:568px;top:389px;width:440px;text-align:center;font-weight:bold;font-size:40px;line-height:48px;white-space:nowrap;letter-spacing:-.15px;transform:scaleY(1.04);transform-origin:50% 38px">List of Items</div>
<!-- header row -->
<div class="abs rh" style="left:436.6px;top:465.2px;letter-spacing:.05px">No#</div>
<div class="abs rh" style="left:472.5px;top:466px;letter-spacing:-.25px">ItemId</div>
<div class="abs rh" style="left:531.8px;top:466px;letter-spacing:-.15px">Items</div>
<div class="abs rh" style="left:675.5px;top:466px;letter-spacing:-.14px">Description</div>
<div class="abs rh" style="left:840.4px;top:466px;letter-spacing:-.33px">Category</div>
<div class="abs rh" style="left:975px;top:466px;letter-spacing:.12px">Price</div>
<div class="abs rh" style="left:1043px;top:466px;letter-spacing:-.28px">Quantity</div>
<div class="abs" style="left:433px;top:505px;width:701px;height:2px;background:#000"></div>
<div class="abs rd rc" style="left:432.5px;top:520.0px;width:40px">1</div>
<div class="abs rd" style="left:536px;top:517.0px;letter-spacing:.06px">Piston Ring "Yamana"</div>
<div class="abs rd" style="left:671.6px;top:517.0px;letter-spacing:.03px">Motor Parts</div>
<div class="abs rd" style="left:848.4px;top:518.8px;letter-spacing:-.3px">ACCESORIES</div>
<div class="abs rd rc rn" style="left:963.1px;top:520.0px;width:60px">350.00</div>
<div class="abs rd rc rn" style="left:1032.5px;top:520.0px;width:60px">0</div>
<div class="abs rd rc" style="left:432.5px;top:557.5px;width:40px">2</div>
<div class="abs rd" style="left:536px;top:554.5px;letter-spacing:-.1px">Nut Lack</div>
<div class="abs rd" style="left:671.6px;top:554.5px;letter-spacing:.03px">Motor Parts</div>
<div class="abs rd" style="left:848.4px;top:556.3px;letter-spacing:-.3px">ACCESORIES</div>
<div class="abs rd rc rn" style="left:963.1px;top:557.5px;width:60px">45.00</div>
<div class="abs rd rc rn" style="left:1032.5px;top:557.5px;width:60px">291</div>
<div class="abs rd rc" style="left:432.5px;top:595.0px;width:40px">3</div>
<div class="abs rd" style="left:536px;top:592.0px;letter-spacing:-.2px">Fly Wheel Nut</div>
<div class="abs rd" style="left:671.6px;top:592.0px;letter-spacing:.03px">Motor Parts</div>
<div class="abs rd" style="left:848.4px;top:593.8px;letter-spacing:-.3px">ACCESORIES</div>
<div class="abs rd rc rn" style="left:963.1px;top:595.0px;width:60px">100.00</div>
<div class="abs rd rc rn" style="left:1032.5px;top:595.0px;width:60px">385</div>
<div class="abs rd rc" style="left:432.5px;top:632.5px;width:40px">4</div>
<div class="abs rd" style="left:536px;top:629.5px;letter-spacing:-.1px">Nut Lack</div>
<div class="abs rd" style="left:671.6px;top:629.5px;letter-spacing:.03px">Motor Parts</div>
<div class="abs rd" style="left:848.4px;top:631.3px;letter-spacing:-.3px">ACCESORIES</div>
<div class="abs rd rc rn" style="left:963.1px;top:632.5px;width:60px">45.00</div>
<div class="abs rd rc rn" style="left:1032.5px;top:632.5px;width:60px">94</div>
<div class="abs rd rc" style="left:432.5px;top:670.0px;width:40px">5</div>
<div class="abs rd" style="left:536px;top:666.0px;letter-spacing:-.08px">Tapelone</div>
<div class="abs rd" style="left:671.6px;top:667.0px;letter-spacing:.03px">Motor Parts</div>
<div class="abs rd" style="left:848.4px;top:668.8px;letter-spacing:-.3px">ACCESORIES</div>
<div class="abs rd rc rn" style="left:963.1px;top:670.0px;width:60px">150.00</div>
<div class="abs rd rc rn" style="left:1032.5px;top:670.0px;width:60px">29</div>
<div class="abs rd rc" style="left:432.5px;top:707.5px;width:40px">6</div>
<div class="abs rd" style="left:536px;top:704.5px;letter-spacing:-.12px">Main Bering</div>
<div class="abs rd" style="left:671.6px;top:704.5px;letter-spacing:.03px">Motor Parts</div>
<div class="abs rd" style="left:848.4px;top:706.3px;letter-spacing:-.3px">ACCESORIES</div>
<div class="abs rd rc rn" style="left:963.1px;top:707.5px;width:60px">350.00</div>
<div class="abs rd rc rn" style="left:1032.5px;top:707.5px;width:60px">200</div>
<!-- scrollbars -->
<div class="abs" style="left:1135px;top:206px;width:16px;height:510px;background:#f0f0f0"></div>
<div class="abs" style="left:1135px;top:223px;width:15px;height:224px;background:#cdcdcd"></div>

<div class="abs" style="left:420px;top:716px;width:731px;height:16px;background:#f0f0f0"></div>
<div class="abs" style="left:480px;top:716px;width:577px;height:15px;background:#ababab"></div>


<svg class="abs" style="left:0;top:0" width="1280" height="1024" viewBox="0 0 1280 1024"><path d="M1139.6 216.6 L1142.5 213.7 L1145.4 216.6 M1139.6 705.2 L1142.5 708.1 L1145.4 705.2 M430 720.9 L427.1 723.7 L430 726.5 M1124 720.9 L1126.9 723.7 L1124 726.5" fill="none" stroke="#555" stroke-width="1.9"/></svg>
<!-- ===== status bar ===== -->
<div class="abs" style="left:418px;top:733px;width:735px;height:1px;background:#fafafa"></div><div class="abs" style="left:415px;top:205px;width:1px;height:552px;background:#fbfbfb"></div><div class="abs" style="left:418px;top:205px;width:1px;height:528px;background:#f8f8f8"></div>
<div class="abs" style="left:415px;top:756px;width:741px;height:1px;background:#fff"></div>
<div class="abs" style="left:415px;top:737px;width:741px;height:1px;background:#dcdcdc"></div>
<div class="abs seg" style="left:417px;top:741px;letter-spacing:-.25px">Current Page No.: 1</div>
<div class="abs" style="left:661px;top:739px;width:1px;height:17px;background:#d4d4d4"></div>
<div class="abs seg" style="left:666px;top:741px;letter-spacing:-.25px">Total Page No.: 1+</div>
<div class="abs" style="left:908px;top:739px;width:1px;height:17px;background:#d4d4d4"></div>
<div class="abs seg" style="left:913px;top:741px;letter-spacing:-.25px">Zoom Factor: 100%</div>


</body>
</html>
